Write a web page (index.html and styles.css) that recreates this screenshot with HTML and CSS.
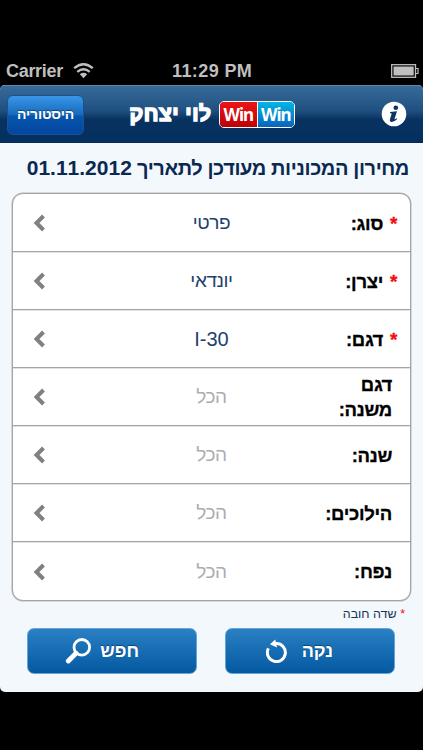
FILE: index.html
```
<!DOCTYPE html>
<html lang="he" dir="rtl">
<head>
	<meta charset="utf-8">
	<title>לוי יצחק</title>
	<link rel="stylesheet" href="styles.css">
</head>
<body>
	<div class="status" dir="ltr">
		<span class="carrier">Carrier</span>
		<svg class="wifi" width="21" height="16" viewBox="0 0 21 16">
			<path d="M1.2 5.2Q10.5-2.6 19.8 5.2M4.3 8.8Q10.5 3.6 16.7 8.8" fill="none" stroke="#bfbfbf" stroke-width="2.4"/>
			<path d="M6.8 11.2Q10.5 8.4 14.2 11.2L10.5 15.2Z" fill="#bfbfbf"/>
		</svg>
		<span class="time">11:29 PM</span>
		<svg class="battery" width="28" height="14" viewBox="0 0 28 14">
			<rect x=".7" y=".7" width="23.8" height="12.6" fill="none" stroke="#bfbfbf" stroke-width="1.3"/>
			<rect x="2.5" y="2.5" width="20.2" height="9" fill="#bfbfbf"/>
			<path d="M24.5 4.5H27V9.5H24.5" fill="none" stroke="#bfbfbf" stroke-width="1.2"/>
		</svg>
	</div>
	<div class="screen">
		<header dir="ltr">
			<button class="history">היסטוריה</button>
			<h1 class="brand">לוי יצחק</h1>
			<div class="logo"><span class="red">Win</span><span class="blue">Win</span></div>
			<svg class="info" width="26" height="26" viewBox="0 0 26 26">
				<circle cx="13" cy="13" r="12.3" fill="#fff"/>
				<circle cx="14.8" cy="6.8" r="2.3" fill="#0b3560"/>
				<path d="M9 10.9L16 10.2L13.5 18Q13.4 19 15.7 17.2L16.3 18Q12.9 21.3 10.3 21Q8.1 20.4 9.1 17.7L10.6 13Q10.7 12 9 12Z" fill="#0b3560"/>
			</svg>
		</header>
		<main>
			<h2>מחירון המכוניות מעודכן לתאריך <span class="num">01.11.2012</span></h2>
			<ul class="fields">
				<li><label><i>*</i>סוג:</label><span class="value">פרטי</span><svg class="arrow" viewBox="0 0 14 18"><path d="M11.5 2L4.5 9L11.5 16"/></svg></li>
				<li><label><i>*</i>יצרן:</label><span class="value">יונדאי</span><svg class="arrow" viewBox="0 0 14 18"><path d="M11.5 2L4.5 9L11.5 16"/></svg></li>
				<li><label><i>*</i>דגם:</label><span class="value num" dir="ltr">I-30</span><svg class="arrow" viewBox="0 0 14 18"><path d="M11.5 2L4.5 9L11.5 16"/></svg></li>
				<li><label>דגם<br>משנה:</label><span class="value all">הכל</span><svg class="arrow" viewBox="0 0 14 18"><path d="M11.5 2L4.5 9L11.5 16"/></svg></li>
				<li><label>שנה:</label><span class="value all">הכל</span><svg class="arrow" viewBox="0 0 14 18"><path d="M11.5 2L4.5 9L11.5 16"/></svg></li>
				<li><label>הילוכים:</label><span class="value all">הכל</span><svg class="arrow" viewBox="0 0 14 18"><path d="M11.5 2L4.5 9L11.5 16"/></svg></li>
				<li><label>נפח:</label><span class="value all">הכל</span><svg class="arrow" viewBox="0 0 14 18"><path d="M11.5 2L4.5 9L11.5 16"/></svg></li>
			</ul>
			<p class="note"><i>*</i> שדה חובה</p>
			<div class="actions">
				<button class="clear"><span>נקה</span>
					<svg width="22" height="24" viewBox="0 0 22 24">
						<path d="M2.4 9.4A9 9 0 1 0 10 4.6" fill="none" stroke="#fff" stroke-width="3"/>
						<path d="M4 5.2L9.3 .6L11 8.6Z" fill="#fff"/>
					</svg>
				</button>
				<button class="search"><span>חפש</span>
					<svg width="26" height="27" viewBox="0 0 26 27">
						<circle cx="16.8" cy="9.3" r="7.8" fill="none" stroke="#fff" stroke-width="2.8"/>
						<path d="M11 15.3L3.3 23" stroke="#fff" stroke-width="4.8" stroke-linecap="round"/>
					</svg>
				</button>
			</div>
		</main>
	</div>
</body>
</html>
```
FILE: styles.css
```
/* fonts */
body, button {
	font-family: "Liberation Sans", sans-serif;
}

i {
	color: #f01010;
	font-style: normal;
}

/* layout */
* {
	box-sizing: border-box;
}

body {
	margin: 0;
	height: 750px;
	overflow: hidden;
	background: #000;
}

.status {
	display: flex;
	align-items: center;
	height: 85px;
	padding: 57px 4px 0 6px;
	color: #bfbfbf;
	font-size: 18px;
	font-weight: bold;
}

.carrier {
	width: 67px;
	letter-spacing: -.3px;
}

.time {
	margin-left: 78px;
	letter-spacing: .4px;
}

.battery {
	margin-left: auto;
}

.screen {
	height: 607px;
	border-radius: 5px;
	overflow: hidden;
	background: #f3f8fd;
}

header {
	display: flex;
	align-items: center;
	height: 58px;
	padding: 0 16px 0 7px;
	background: linear-gradient(#376b9a, #1f5080 44%, #083260 60%, #033060);
	border-top: 1px solid #5587b0;
	border-bottom: 1px solid #0a2850;
}

button {
	border: 0;
	padding: 0;
	color: #fff;
	font-weight: bold;
	text-shadow: 0 -1px 1px rgba(0, 20, 60, .5);
}

.history {
	width: 77px;
	height: 40px;
	margin-top: 2px;
	padding-bottom: 2px;
	border: 1px solid #1c5291;
	border-radius: 6px;
	background: linear-gradient(#3997e8, #1869bb 50%, #0756ad 52%, #0346a0);
	font-size: 14px;
	letter-spacing: -.2px;
}

.brand {
	width: 85px;
	margin: 0 6px 0 44px;
	color: #fff;
	font-size: 21px;
	font-weight: 800;
	line-height: 30px;
	text-align: center;
	letter-spacing: .5px;
	white-space: nowrap;
	-webkit-text-stroke: 1.5px #fff;
}

.logo {
	display: flex;
	width: 76px;
	height: 27px;
	border: 1px solid #fff;
	border-radius: 5px;
	overflow: hidden;
	color: #fff;
	font: bold 17px/26px "Noto Sans", sans-serif;
}

.logo span {
	flex: 1;
	text-align: center;
	letter-spacing: -1px;
}

.red {
	background: linear-gradient(#ed1515, #bd0006);
	border-right: 1px solid #fff;
}

.blue {
	background: linear-gradient(#00b7e4, #0b63bd);
}

.info {
	margin-left: auto;
}

main {
	padding: 8px 12px 0;
}

h2 {
	margin: 0;
	height: 42px;
	padding-right: 2px;
	color: #0b2950;
	font-size: 20px;
	letter-spacing: -.4px;
	line-height: 34px;
	white-space: nowrap;
}

h2 .num {
	font-size: 21px;
	letter-spacing: 0;
}

.fields {
	margin: 0;
	padding: 0;
	list-style: none;
	height: 408px;
	border: 1px solid #a4a4a7;
	border-radius: 11px;
	background: #fff;
	box-shadow: 0 0 0 .5px #b8b8ba;
}

.fields li {
	display: grid;
	grid-template-columns: 117px 1fr 117px;
	align-items: center;
	height: 58px;
	padding: 1px 18px 0 19px;
	border-bottom: 1px solid #a4a4a7;
	box-shadow: 0 1px #e2e2e4;
}

.fields li:last-child {
	border-bottom: 0;
	box-shadow: none;
}

label {
	font-size: 18.5px;
	font-weight: bold;
	letter-spacing: -.3px;
	line-height: 25px;
	-webkit-text-stroke: .3px;
}

label i {
	display: inline-block;
	width: 9px;
	margin-left: 5px;
	margin-right: -5px;
	font-size: 19px;
}

.value {
	padding-left: 1px;
	margin-left: 2px;
	margin-right: -2px;
	color: #1d426d;
	font-size: 19px;
	letter-spacing: -.4px;
	text-align: center;
	transform: translateX(-3px);
}

.value.num {
	font-size: 20px;
	letter-spacing: 0;
}

.value.all {
	color: #adadad;
}

.arrow {
	width: 14px;
	height: 18px;
	margin-right: auto;
	fill: none;
	stroke: #808080;
	stroke-width: 4;
}

.note {
	margin: 0;
	height: 27px;
	padding: 2px 6px 0;
	color: #1a3353;
	font-size: 12.5px;
	line-height: 22px;
}

.actions {
	display: flex;
	justify-content: space-between;
	padding: 0 16px 0 15px;
}

.actions button {
	display: flex;
	align-items: center;
	width: 170px;
	height: 46px;
	border: 1px solid #65a4d5;
	border-radius: 7px;
	background: linear-gradient(#2a80c3, #0459a1);
	font-size: 18px;
}

.actions .clear {
	padding-right: 61px;
	gap: 14px;
}

.actions .search {
	padding-right: 57px;
	gap: 9px;
}
```
